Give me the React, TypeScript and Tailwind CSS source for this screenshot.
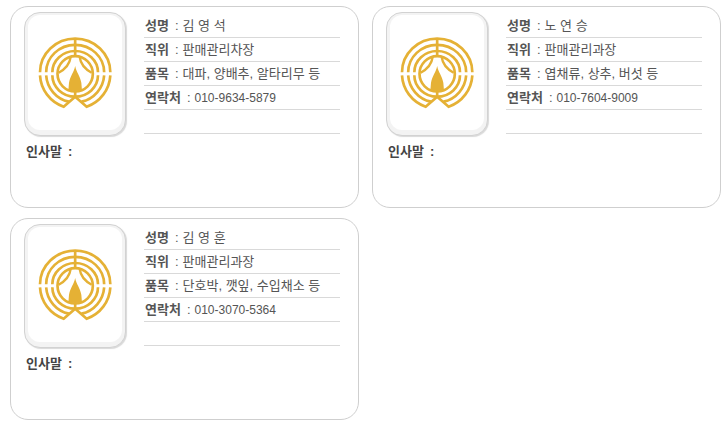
type Staff = {
  name: string;
  position: string;
  items: string;
  phone: string;
};

const staff: Staff[] = [
  {
    name: "김 영 석",
    position: "판매관리차장",
    items: "대파, 양배추, 알타리무 등",
    phone: "010-9634-5879",
  },
  {
    name: "노 연 승",
    position: "판매관리과장",
    items: "엽채류, 상추, 버섯 등",
    phone: "010-7604-9009",
  },
  {
    name: "김 영 훈",
    position: "판매관리과장",
    items: "단호박, 깻잎, 수입채소 등",
    phone: "010-3070-5364",
  },
];

function Emblem() {
  return (
    <svg
      viewBox="22 23 222 222"
      className="h-[74px] w-[74px]"
      fill="none"
      stroke="#e5b135"
      strokeWidth="8"
      role="img"
      aria-label="로고"
    >
      {/* upper arcs */}
      <path d="M28 132a105.500 101 0 0 1 211 0" />
      <path d="M46.500 132a87 82.500 0 0 1 174 0" />
      <path d="M65 132a68.500 64 0 0 1 137 0" />
      {/* lower arcs, cut by the notch */}
      <path d="M28 141a105.500 105.500 0 0 0 71 94L133.500 205L168 235a105.500 105.500 0 0 0 71-94" />
      <path d="M46.500 141a87 87 0 0 0 68 79M220.500 141a87 87 0 0 1-68 79" />
      <path d="M65 141a68.500 64 0 0 0 137 0" />
      <circle cx="133.500" cy="136.500" r="53" />
      <path d="M133.500 29V86" />
      {/* leaves and flame */}
      <path d="M120 86Q116 116 84 133M147 86Q151 116 183 133" strokeWidth="7" />
      <path d="M133.500 180V207" />
      <path
        d="M133.500 113C130 131 119 143 115 163L113 187H154L152 163C148 143 137 131 133.500 113Z"
        fill="#e5b135"
        stroke="none"
      />
    </svg>
  );
}

function Row({ label, value, small }: { label: string; value: string; small?: boolean }) {
  return (
    <div className="flex h-6 items-center gap-1 border-b border-[#d9d9d9] pl-px whitespace-nowrap">
      <dt className="flex gap-[6px] font-bold">
        {label} <span className="font-normal">:</span>
      </dt>
      <dd className={small ? "text-xs" : ""}>{value}</dd>
    </div>
  );
}

function StaffCard({ person }: { person: Staff }) {
  return (
    <article className="min-h-[202px] rounded-[18px] border border-[#cfcfcf] pt-[5px] pr-[18px] pb-4 pl-[13px]">
      <div className="flex gap-[18px]">
        <div className="shrink-0 rounded-2xl border border-[#d2d2d2] bg-[#f3f3f3] px-[3px] pt-[2px] pb-[5px] shadow-[1px_1px_1px_#d9d9d9]">
          <div className="flex h-[115px] w-[94px] items-center justify-center rounded-xl bg-white">
            <Emblem />
          </div>
        </div>
        <dl className="min-w-0 flex-1 pt-[2px]">
          <Row label="성명" value={person.name} />
          <Row label="직위" value={person.position} />
          <Row label="품목" value={person.items} />
          <Row label="연락처" value={person.phone} small />
          <div className="h-6 border-b border-[#d9d9d9]" />
        </dl>
      </div>
      <p className="mt-[6px] flex gap-[6px] pl-[2px] font-bold text-[#444444]">
        인사말 <span>:</span>
      </p>
    </article>
  );
}

export default function App() {
  return (
    <main className="grid grid-cols-1 gap-x-[13px] gap-y-[10px] bg-white pt-[6px] pr-[5px] pb-[10px] pl-[10px] font-['Liberation_Sans','Noto_Sans_CJK_KR',sans-serif] text-[13px] leading-5 text-[#555555] sm:grid-cols-2">
      {staff.map((person) => (
        <StaffCard key={person.name} person={person} />
      ))}
    </main>
  );
}
